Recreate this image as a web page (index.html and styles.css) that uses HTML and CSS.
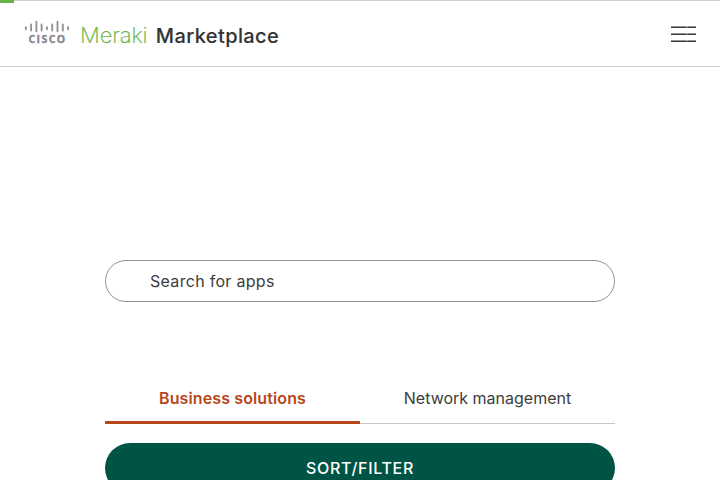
FILE: index.html
```
<!DOCTYPE html>
<html lang="en">
<head>
<meta charset="utf-8">
<title>Cisco Meraki Marketplace</title>
<link rel="stylesheet" href="styles.css">
</head>
<body>
<div class="progress"></div>
<header class="header">
  <a class="brand">
    <svg class="logo" width="260" height="36" viewBox="24 16 260 36">
      <path class="bars" d="M25.8 27.3v2M31.1 24.5v6M36.4 21.7v9.5M41.6 24.5v6M46.9 27.3v2M52.2 24.5v6M57.5 21.7v9.5M62.8 24.5v6M68.1 27.3v2"/>
      <text class="cisco" x="28.5" y="43.2" textLength="36.7">CISCO</text>
      <text class="meraki" x="80" y="43" textLength="67.5">Meraki</text>
      <text class="market" x="155.8" y="43.2" textLength="123">Marketplace</text>
    </svg>
  </a>
  <button class="menu" aria-label="Menu">
    <svg width="25" height="16" viewBox="0 0 25 16"><path class="menu-soft" d="M0 .5h25M0 7.5h25M0 14.5h25"/><path class="menu-line" d="M0 1.5h25M0 8.5h25M0 15.5h25"/><path class="menu-gap" d="M16 0v16"/></svg>
  </button>
</header>
<main class="content">
  <input class="search" type="text" placeholder="Search for apps">
  <nav class="tabs">
    <a class="tab active">Business solutions</a>
    <a class="tab">Network management</a>
  </nav>
  <button class="filter">SORT/FILTER</button>
</main>
</body>
</html>
```
FILE: styles.css
```
* { box-sizing: border-box; }
body {
  margin: 0;
  height: 480px;
  overflow: hidden;
  background: #fff;
  color: #3c3d3c;
  font-family: Inter, sans-serif;
  font-size: 16px;
}
button { border: 0; padding: 0; font-family: inherit; }
.progress {
  position: absolute;
  top: 0;
  left: 0;
  width: 14px;
  height: 3px;
  background: #67b346;
}
.header {
  display: flex;
  justify-content: space-between;
  height: 67px;
  padding: 15px 24px 0;
  border-top: 1px solid #d0d0d0;
  border-bottom: 1px solid #d0d0d0;
}
.logo { display: block; }
.bars { stroke: #929397; stroke-width: 1.9; stroke-linecap: round; }
.cisco { font: 700 10.5px "Open Sans", sans-serif; fill: #85868a; stroke: #85868a; stroke-width: .3; }
.meraki { font: 200 22px Inter, sans-serif; fill: #67b346; stroke: #67b346; stroke-width: .2; }
.market { font: 500 20px Inter, sans-serif; fill: #333; stroke: #333; stroke-width: .1; }
.menu { width: 25px; height: 16px; margin-top: 10px; background: none; }
.menu svg { display: block; }
.menu-soft { stroke: #969698; }
.menu-line { stroke: #38383b; }
.menu-gap { stroke: #fff; stroke-opacity: .3; stroke-width: 1.5; }
.content { width: 510px; margin: 193px auto 0; }
.search {
  display: block;
  width: 100%;
  height: 42px;
  padding: 0 44px;
  border: 1px solid #8f9190;
  border-radius: 21px;
  background: #fff;
  font: 400 16px Inter, sans-serif;
  letter-spacing: .3px;
}
.search::placeholder { color: #3c3d3c; opacity: 1; }
.tabs { display: flex; height: 51px; margin-top: 71px; }
.tab {
  flex: 1;
  padding-top: 13px;
  line-height: 24px;
  text-align: center;
  border-bottom: 1px solid #c5c9c7;
}
.active { color: #b7471b; font-weight: 600; border-bottom: 3px solid #b7471b; letter-spacing: .12px; }
.filter {
  display: block;
  width: 100%;
  height: 50px;
  margin-top: 19px;
  border-radius: 25px;
  background: #005445;
  color: #fff;
  font-size: 16px;
  font-weight: 500;
  letter-spacing: .7px;
}
```
